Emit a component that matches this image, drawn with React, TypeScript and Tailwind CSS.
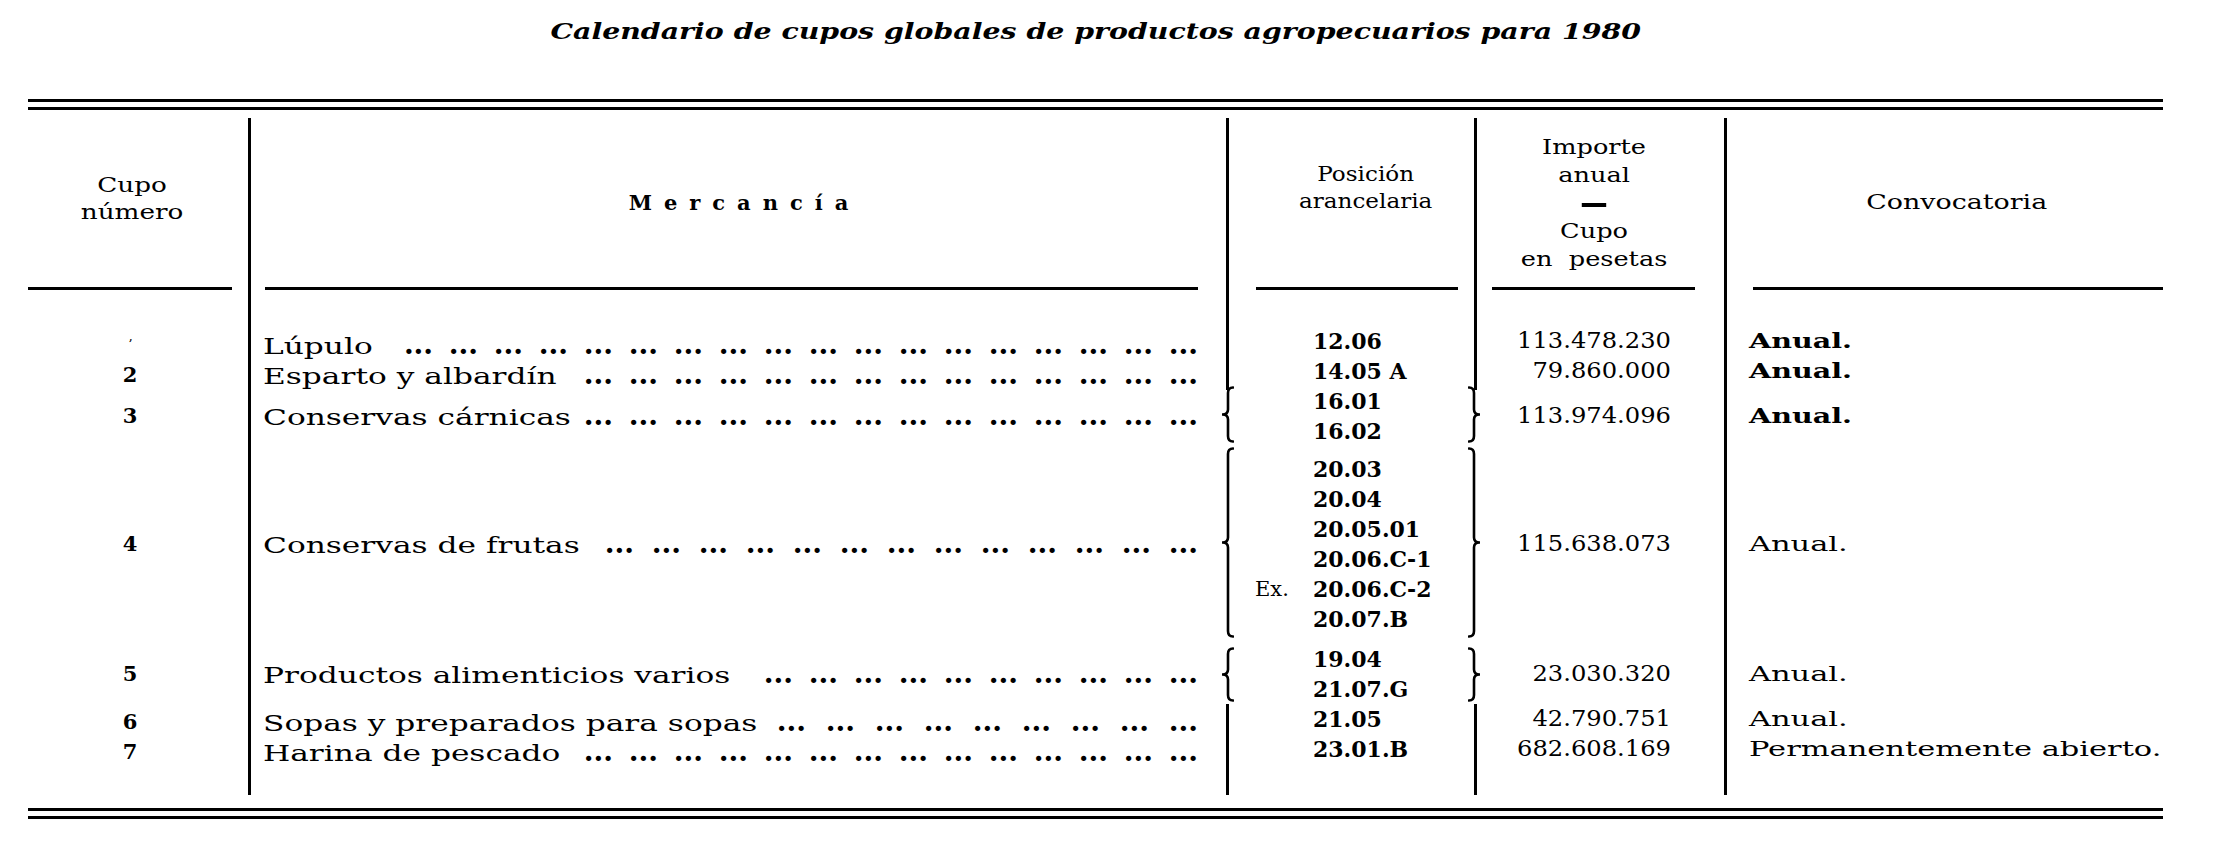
import React from "react";

type Line = { pre?: string; code: string };
type Row = {
  n: string;
  name: string;
  nameW: string;
  dots: number;
  ws: string;
  pos: Line[];
  imp: string;
  conv: string;
  strong?: boolean;
};
type Group = {
  brace: boolean;
  h: string;
  pt: string;
  ptLead: string;
  braceTop: string;
  braceH: number;
  rows: Row[];
};

const rowH: Record<number, string> = { 1: "h-[30px]", 2: "h-[60px]", 6: "h-[180px]" };

const groups: Group[] = [
  {
    brace: false,
    h: "h-[96px]",
    pt: "pt-[36px]",
    ptLead: "pt-[40px]",
    braceTop: "",
    braceH: 0,
    rows: [
      {
        n: "'",
        name: "Lúpulo",
        nameW: "w-[118px]",
        dots: 18,
        ws: "[word-spacing:6px]",
        pos: [{ code: "12.06" }],
        imp: "113.478.230",
        conv: "Anual.",
        strong: true,
      },
      {
        n: "2",
        name: "Esparto y albardín",
        nameW: "w-[306px]",
        dots: 14,
        ws: "[word-spacing:6px]",
        pos: [{ code: "14.05 A" }],
        imp: "79.860.000",
        conv: "Anual.",
        strong: true,
      },
    ],
  },
  {
    brace: true,
    h: "h-[60px]",
    pt: "pt-0",
    ptLead: "pt-0",
    braceTop: "mt-0",
    braceH: 57,
    rows: [
      {
        n: "3",
        name: "Conservas cárnicas",
        nameW: "w-[309px]",
        dots: 14,
        ws: "[word-spacing:6px]",
        pos: [{ code: "16.01" }, { code: "16.02" }],
        imp: "113.974.096",
        conv: "Anual.",
        strong: true,
      },
    ],
  },
  {
    brace: true,
    h: "h-[192px]",
    pt: "pt-[8px]",
    ptLead: "pt-[8px]",
    braceTop: "mt-[1px]",
    braceH: 191,
    rows: [
      {
        n: "4",
        name: "Conservas de frutas",
        nameW: "w-[326px]",
        dots: 13,
        ws: "[word-spacing:8px]",
        pos: [
          { code: "20.03" },
          { code: "20.04" },
          { code: "20.05.01" },
          { code: "20.06.C-1" },
          { pre: "Ex.", code: "20.06.C-2" },
          { code: "20.07.B" },
        ],
        imp: "115.638.073",
        conv: "Anual.",
      },
    ],
  },
  {
    brace: true,
    h: "h-[66px]",
    pt: "pt-[6px]",
    ptLead: "pt-[6px]",
    braceTop: "mt-[9px]",
    braceH: 55,
    rows: [
      {
        n: "5",
        name: "Productos alimenticios varios",
        nameW: "w-[480px]",
        dots: 10,
        ws: "[word-spacing:6px]",
        pos: [{ code: "19.04" }, { code: "21.07.G" }],
        imp: "23.030.320",
        conv: "Anual.",
      },
    ],
  },
  {
    brace: false,
    h: "h-[91px]",
    pt: "pt-0",
    ptLead: "pt-[3px]",
    braceTop: "",
    braceH: 0,
    rows: [
      {
        n: "6",
        name: "Sopas y preparados para sopas",
        nameW: "w-[500px]",
        dots: 9,
        ws: "[word-spacing:10px]",
        pos: [{ code: "21.05" }],
        imp: "42.790.751",
        conv: "Anual.",
      },
      {
        n: "7",
        name: "Harina de pescado",
        nameW: "w-[306px]",
        dots: 14,
        ws: "[word-spacing:6px]",
        pos: [{ code: "23.01.B" }],
        imp: "682.608.169",
        conv: "Permanentemente abierto.",
      },
    ],
  },
];

// dot leaders: groups of three, about 46px apart
const leader = (count: number) => Array(count).fill("...").join(" ");

function Brace({ h, right }: { h: number; right?: boolean }) {
  const m = h / 2;
  const d = right
    ? `M 1 1.5 Q 6 1.5 6 7 L 6 ${m - 5} Q 6 ${m} 11.5 ${m} Q 6 ${m} 6 ${m + 5} L 6 ${h - 7} Q 6 ${h - 1.5} 1 ${h - 1.5}`
    : `M 11 1.5 Q 6 1.5 6 7 L 6 ${m - 5} Q 6 ${m} 0.5 ${m} Q 6 ${m} 6 ${m + 5} L 6 ${h - 7} Q 6 ${h - 1.5} 11 ${h - 1.5}`;
  return (
    <svg width={12} height={h} viewBox={`0 0 12 ${h}`} className="block shrink-0">
      <path d={d} fill="none" stroke="black" strokeWidth={2.6} strokeLinecap="round" strokeLinejoin="round" />
    </svg>
  );
}

function Header() {
  return (
    <div className="mt-[8px] grid h-[172px] grid-cols-[220px_978px_248px_250px_439px] text-[21px]">
      {/* Cupo */}
      <div className="flex flex-col">
        <div className="flex flex-1 items-center justify-center pr-[12px] pb-[8px]">
          <div className="origin-center scale-x-[1.25] text-center leading-[27px]">
            Cupo
            <br />
            número
          </div>
        </div>
        <div className="mr-[16px] h-[3px] bg-black" />
      </div>

      {/* Mercancía */}
      <div className="flex flex-col border-l-[3px] border-black">
        <div className="flex flex-1 items-center justify-center pl-[12px]">
          <div className="font-bold tracking-[12px]">Mercancía</div>
        </div>
        <div className="ml-[14px] mr-[28px] h-[3px] bg-black" />
      </div>

      {/* Posición */}
      <div className="flex flex-col border-l-[3px] border-black">
        <div className="flex flex-1 items-center justify-center pl-[29px] pb-[30px]">
          <div className="origin-center scale-x-[1.1] text-center leading-[27px]">
            Posición
            <br />
            arancelaria
          </div>
        </div>
        <div className="ml-[27px] mr-[16px] h-[3px] bg-black" />
      </div>

      {/* Importe */}
      <div className="flex flex-col border-l-[3px] border-black">
        <div className="flex flex-1 items-center justify-center pr-[13px]">
          <div className="origin-center scale-x-[1.22] text-center leading-[28px]">
            <div>Importe</div>
            <div>anual</div>
            <div className="flex h-[28px] items-center justify-center">
              <div className="mt-[4px] h-[4px] w-[20px] bg-black" />
            </div>
            <div>Cupo</div>
            <div>en&nbsp; pesetas</div>
          </div>
        </div>
        <div className="ml-[15px] mr-[29px] h-[3px] bg-black" />
      </div>

      {/* Convocatoria */}
      <div className="flex flex-col border-l-[3px] border-black">
        <div className="flex flex-1 items-center justify-center pl-[24px]">
          <div className="origin-center scale-x-[1.28]">Convocatoria</div>
        </div>
        <div className="ml-[26px] h-[3px] bg-black" />
      </div>
    </div>
  );
}

function Body() {
  return (
    <div>
      {groups.map((g, gi) => (
        <div key={gi} className={`grid grid-cols-[220px_978px_248px_250px_439px] ${g.h}`}>
          {/* Cupo número */}
          <div className={`flex flex-col pr-[16px] ${g.ptLead}`}>
            {g.rows.map((r) => (
              <div
                key={r.n}
                className={`flex items-center justify-center text-[21px] font-bold leading-[30px] ${rowH[r.pos.length]}`}
              >
                {r.n === "'" ? <span className="text-[13px] font-normal">ʼ</span> : r.n}
              </div>
            ))}
          </div>

          {/* Mercancía */}
          <div className={`flex flex-col border-l-[3px] border-black pl-[12px] pr-[28px] ${g.ptLead}`}>
            {g.rows.map((r) => (
              <div key={r.n} className={`flex items-center ${rowH[r.pos.length]}`}>
                <div className="flex h-[30px] w-full items-baseline">
                  <div className={`shrink-0 ${r.nameW}`}>
                    <span className="inline-block origin-left scale-x-[1.42] whitespace-nowrap text-[22px] leading-[30px]">
                      {r.name}
                    </span>
                  </div>
                  <span className={`flex flex-1 justify-end whitespace-nowrap text-[28px] leading-[30px] font-bold ${r.ws}`}>
                    <span>{leader(r.dots)}</span>
                  </span>
                </div>
              </div>
            ))}
          </div>

          {/* Posición arancelaria */}
          <div className={g.brace ? "flex" : "flex border-l-[3px] border-black"}>
            {g.brace && (
              <div className={`-ml-[4px] ${g.braceTop}`}>
                <Brace h={g.braceH} />
              </div>
            )}
            <div className={`flex-1 ${g.pt} ${g.brace ? "pl-[21px]" : "pl-[26px]"}`}>
              {g.rows.flatMap((r) =>
                r.pos.map((l) => (
                  <div key={l.code} className="flex h-[30px] items-center whitespace-nowrap text-[22px] font-bold leading-[30px]">
                    <span className="w-[58px] shrink-0 text-[21px] font-normal">{l.pre ?? ""}</span>
                    <span>{l.code}</span>
                  </div>
                ))
              )}
            </div>
            {g.brace && (
              <div className={`-mr-[6px] ${g.braceTop}`}>
                <Brace h={g.braceH} right />
              </div>
            )}
          </div>

          {/* Importe */}
          <div className={`flex flex-col pr-[53px] ${g.pt} ${g.brace ? "" : "border-l-[3px] border-black"}`}>
            {g.rows.map((r) => (
              <div key={r.n} className={`flex items-center justify-end ${rowH[r.pos.length]}`}>
                <span className="inline-block origin-right scale-x-[1.1] text-[22px] leading-[30px]">{r.imp}</span>
              </div>
            ))}
          </div>

          {/* Convocatoria */}
          <div className={`flex flex-col border-l-[3px] border-black pl-[22px] ${g.pt}`}>
            {g.rows.map((r) => (
              <div key={r.n} className={`flex items-center ${rowH[r.pos.length]}`}>
                <span
                  className={
                    r.strong
                      ? "inline-block origin-left scale-x-[1.36] whitespace-nowrap text-[21px] font-bold leading-[30px]"
                      : "inline-block origin-left scale-x-[1.45] whitespace-nowrap text-[21px] leading-[30px]"
                  }
                >
                  {r.conv}
                </span>
              </div>
            ))}
          </div>
        </div>
      ))}
    </div>
  );
}

export default function App() {
  return (
    <div className="h-[844px] w-[2236px] overflow-hidden bg-white font-['DejaVu_Serif',serif] text-black">
      <div className="ml-[28px] w-[2135px]">
        <div className="flex justify-center pt-[18px]">
          <div className="origin-center scale-x-[1.29] text-[22px] leading-[26px] font-bold italic whitespace-nowrap">
            Calendario de cupos globales de productos agropecuarios para 1980
          </div>
        </div>

        <div className="mt-[55px] h-[3px] bg-black" />
        <div className="mt-[5px] h-[3px] bg-black" />

        <Header />
        <Body />

        <div className="mt-[13px] h-[3px] bg-black" />
        <div className="mt-[5px] h-[3px] bg-black" />
      </div>
    </div>
  );
}
